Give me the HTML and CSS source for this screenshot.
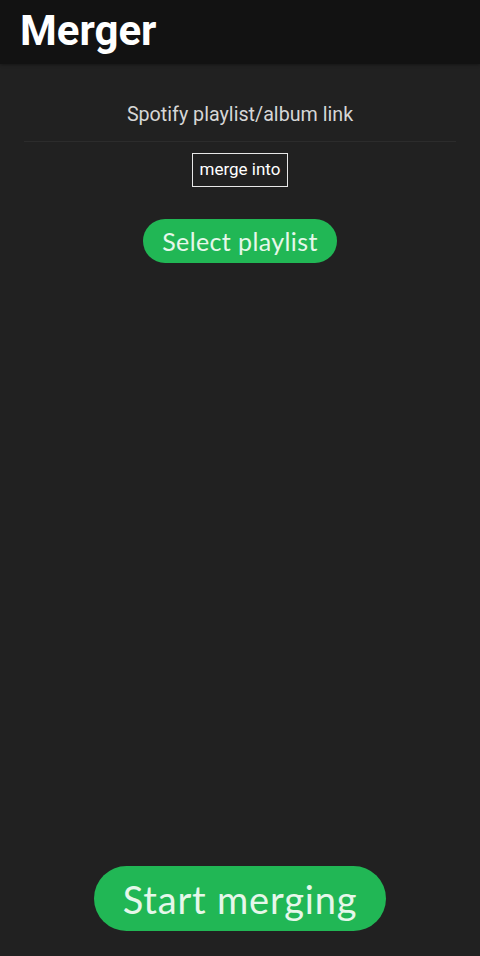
FILE: index.html
```html
<!DOCTYPE html>
<html>
<head>
<meta charset="utf-8">
<link rel="stylesheet" href="styles.css">
</head>
<body>
<div class="app">
  <header class="bar"><h1 class="title">Merger</h1></header>
  <main class="content">
    <div class="field">Spotify playlist/album link</div>
    <div class="merge-label">merge into</div>
    <button class="pill select">Select playlist</button>
  </main>
  <footer class="bottom">
    <button class="pill start">Start merging</button>
  </footer>
</div>
</body>
</html>
```
FILE: styles.css
```css
html, body { margin: 0; padding: 0; }
body { background: #212121; font-family: Roboto, "Noto Sans", sans-serif; }
.app { width: 480px; height: 956px; display: flex; flex-direction: column; }
.bar { height: 64px; background: #121212; display: flex; align-items: center; padding-left: 20px; box-shadow: 0 1px 3px rgba(0,0,0,0.35); }
.title { margin: 0; color: #fff; font-family: Roboto, sans-serif; font-weight: 700; font-size: 42px; line-height: 1; position: relative; top: -1px; }
.content { flex: 1; display: flex; flex-direction: column; align-items: center; padding-top: 39px; }
.field { width: 432px; text-align: center; color: #d6d6d6; font-size: 19.7px; padding-bottom: 15px; border-bottom: 1px solid #2c2c2c; }
.merge-label { margin-top: 11px; border: 1.5px solid #e8e8e8; color: #fff; font-size: 17px; padding: 6px 7px 7px; line-height: 19px; }
.pill { border: none; background: #21b755; color: #e6f7ea; font-family: Lato, "Noto Sans", sans-serif; border-radius: 999px; cursor: pointer; }
.select { margin-top: 32px; width: 194px; height: 44px; font-size: 25px; letter-spacing: 0.4px; padding: 0; }
.bottom { display: flex; justify-content: center; padding-bottom: 25px; }
.start { width: 292px; height: 65px; font-size: 38px; letter-spacing: 0.8px; padding: 0; }
```
